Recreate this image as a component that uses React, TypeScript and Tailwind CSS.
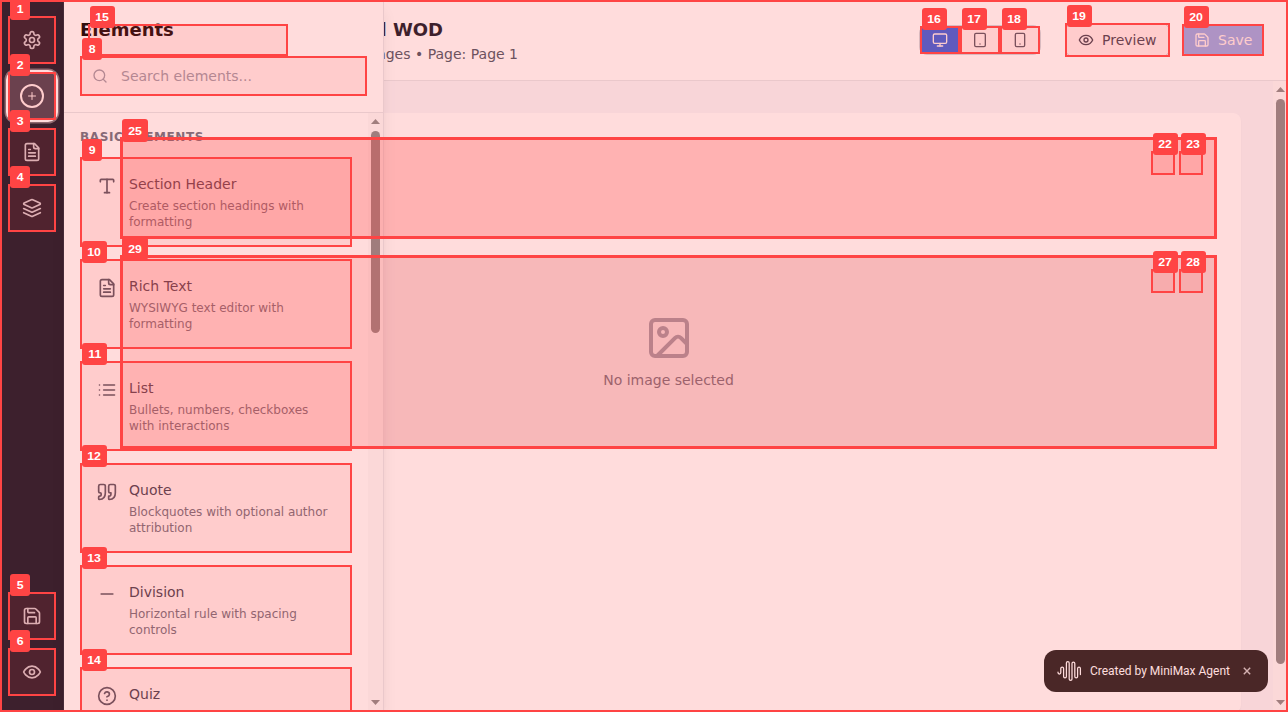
import type { ReactNode } from "react";
import { Plus, Search, Type, Minus, CircleHelp, Monitor, Tablet, Smartphone, Image as ImageIcon } from "lucide-react";

type IconProps = { size?: number; className?: string };

function Icon({ size = 20, className, children }: IconProps & { children: ReactNode }) {
  return (
    <svg
      width={size} height={size} viewBox="0 0 24 24" className={className}
      fill="none" stroke="currentColor" strokeWidth="2" strokeLinecap="round" strokeLinejoin="round"
    >
      {children}
    </svg>
  );
}

const Settings = (p: IconProps) => (
  <Icon {...p}>
    <path d="M12.22 2h-.44a2 2 0 0 0-2 2v.18a2 2 0 0 1-1 1.73l-.43.25a2 2 0 0 1-2 0l-.15-.08a2 2 0 0 0-2.73.73l-.22.38a2 2 0 0 0 .73 2.73l.15.1a2 2 0 0 1 1 1.72v.51a2 2 0 0 1-1 1.74l-.15.09a2 2 0 0 0-.73 2.73l.22.38a2 2 0 0 0 2.73.73l.15-.08a2 2 0 0 1 2 0l.43.25a2 2 0 0 1 1 1.73V20a2 2 0 0 0 2 2h.44a2 2 0 0 0 2-2v-.18a2 2 0 0 1 1-1.73l.43-.25a2 2 0 0 1 2 0l.15.08a2 2 0 0 0 2.73-.73l.22-.39a2 2 0 0 0-.73-2.73l-.15-.08a2 2 0 0 1-1-1.74v-.5a2 2 0 0 1 1-1.74l.15-.09a2 2 0 0 0 .73-2.73l-.22-.38a2 2 0 0 0-2.73-.73l-.15.08a2 2 0 0 1-2 0l-.43-.25a2 2 0 0 1-1-1.73V4a2 2 0 0 0-2-2z" />
    <circle cx="12" cy="12" r="3" />
  </Icon>
);
const FileText = (p: IconProps) => (
  <Icon {...p}>
    <path d="M15 2H6a2 2 0 0 0-2 2v16a2 2 0 0 0 2 2h12a2 2 0 0 0 2-2V7Z" />
    <path d="M14 2v4a2 2 0 0 0 2 2h4M10 9H8M16 13H8M16 17H8" />
  </Icon>
);
const Layers = (p: IconProps) => (
  <Icon {...p}>
    <path d="m12.83 2.18a2 2 0 0 0-1.66 0L2.6 6.08a1 1 0 0 0 0 1.83l8.58 3.91a2 2 0 0 0 1.66 0l8.58-3.9a1 1 0 0 0 0-1.83Z" />
    <path d="m22 17.65-9.17 4.16a2 2 0 0 1-1.66 0L2 17.65M22 12.65l-9.17 4.16a2 2 0 0 1-1.66 0L2 12.65" />
  </Icon>
);
const Save = (p: IconProps) => (
  <Icon {...p}>
    <path d="M15.2 3a2 2 0 0 1 1.4.6l3.8 3.8a2 2 0 0 1 .6 1.4V19a2 2 0 0 1-2 2H5a2 2 0 0 1-2-2V5a2 2 0 0 1 2-2z" />
    <path d="M17 21v-7a1 1 0 0 0-1-1H8a1 1 0 0 0-1 1v7M7 3v4a1 1 0 0 0 1 1h7" />
  </Icon>
);
const Eye = (p: IconProps) => (
  <Icon {...p}>
    <path d="M2 12s3-7 10-7 10 7 10 7-3 7-10 7-10-7-10-7Z" />
    <circle cx="12" cy="12" r="3" />
  </Icon>
);
const List = (p: IconProps) => (
  <Icon {...p}>
    <path d="M8 6h13M8 12h13M8 18h13M3 6h.01M3 12h.01M3 18h.01" />
  </Icon>
);
const Quote = (p: IconProps) => (
  <Icon {...p}>
    <path d="M3 21c3 0 7-1 7-8V5c0-1.25-.756-2.017-2-2H4c-1.25 0-2 .75-2 1.972V11c0 1.25.75 2 2 2 1 0 1 0 1 1v1c0 1-1 2-2 2s-1 .008-1 1.031V20c0 1 0 1 1 1z" />
    <path d="M15 21c3 0 7-1 7-8V5c0-1.25-.757-2.017-2-2h-4c-1.25 0-2 .75-2 1.972V11c0 1.25.75 2 2 2h.75c0 2.25.25 4-2.75 4v3c0 1 0 1 1 1z" />
  </Icon>
);

function RailButton({ children, active }: { children: ReactNode; active?: boolean }) {
  return (
    <button
      className={
        active
          ? "flex size-12 items-center justify-center rounded-lg bg-gray-700 text-white shadow-[0_0_0_2px_#fff,0_0_0_3.5px_#77727a]"
          : "flex size-12 items-center justify-center rounded-lg text-gray-300"
      }
    >
      {children}
    </button>
  );
}

const elements = [
  { icon: Type, title: "Section Header", text: "Create section headings with formatting" },
  { icon: FileText, title: "Rich Text", text: "WYSIWYG text editor with formatting" },
  { icon: List, title: "List", text: "Bullets, numbers, checkboxes with interactions" },
  { icon: Quote, title: "Quote", text: "Blockquotes with optional author attribution" },
  { icon: Minus, title: "Division", text: "Horizontal rule with spacing controls" },
  { icon: CircleHelp, title: "Quiz", text: "" },
];

function Arrow({ down }: { down?: boolean }) {
  return (
    <svg width="9" height="5" viewBox="0 0 9 5" className="shrink-0" fill="#8b8b8b">
      <path d={down ? "M0 0h9L4.5 5z" : "M0 5h9L4.5 0z"} />
    </svg>
  );
}

function Rail() {
  return (
    <nav className="flex w-16 shrink-0 flex-col justify-between border-r border-gray-800 bg-gray-900 py-4 pr-[7px] pl-2">
      <div className="flex flex-col gap-2">
        <RailButton><Settings /></RailButton>
        <RailButton active>
          <span className="flex size-6 items-center justify-center rounded-full border-2 border-white">
            <Plus size={12} />
          </span>
        </RailButton>
        <RailButton><FileText /></RailButton>
        <RailButton><Layers /></RailButton>
      </div>
      <div className="flex flex-col gap-2">
        <RailButton><Save /></RailButton>
        <RailButton><Eye /></RailButton>
      </div>
    </nav>
  );
}

function ElementsPanel() {
  return (
    <aside className="z-10 flex w-80 shrink-0 flex-col border-r border-gray-200 bg-white shadow-[0_10px_15px_-3px_rgba(0,0,0,0.1),0_4px_6px_-4px_rgba(0,0,0,0.1)]">
      <div className="flex h-[113px] shrink-0 flex-col gap-3 border-b border-gray-200 px-4 pt-4">
        <h2 className="text-lg font-semibold text-black">Elements</h2>
        <div className="flex h-10 shrink-0 items-center gap-[13px] px-3 text-sm text-gray-400">
          <Search size={16} />
          Search elements...
        </div>
      </div>
      <div className="flex min-h-0 flex-1">
        <div className="flex min-w-0 flex-1 flex-col overflow-hidden px-4">
          <h3 className="mt-4 mb-3 shrink-0 text-xs font-semibold tracking-wider text-gray-500">BASIC ELEMENTS</h3>
          <div className="flex flex-col gap-3">
            {elements.map(({ icon: ElementIcon, title, text }) => (
              <div key={title} className="flex h-[90px] shrink-0 gap-3 rounded-lg px-[17px] pt-[17px]">
                <ElementIcon size={20} className="mt-0.5 shrink-0 text-gray-600" />
                <div>
                  <div className="text-sm leading-5 font-medium text-gray-700">{title}</div>
                  <p className="mt-1 text-xs text-gray-500">{text}</p>
                </div>
              </div>
            ))}
          </div>
        </div>
        <div className="flex w-[15px] shrink-0 flex-col items-center bg-[#fafafa] pt-[6px] pb-[7px]">
          <Arrow />
          <div className="mt-[7px] h-[202px] w-[9px] rounded-full bg-[#8b8b8b]" />
          <div className="flex-1" />
          <Arrow down />
        </div>
      </div>
    </aside>
  );
}

function Header() {
  return (
    <header className="flex h-[81px] shrink-0 items-start justify-between border-b border-gray-200 bg-white pr-6">
      <div className="-ml-[66px] flex w-[200px] flex-col items-end pt-4 whitespace-nowrap">
        <h1 className="mr-[75px] text-lg font-semibold text-gray-900">Untitled WOD</h1>
        <p className="text-sm text-gray-600">2 pages • Page: Page 1</p>
      </div>
      <div className="flex h-20 items-center">
        <div className="mr-6 flex h-[30px] w-[122px] overflow-hidden rounded-lg border border-gray-300 text-gray-600">
          <div className="flex w-10 items-center justify-center bg-[#2563eb] text-white"><Monitor size={16} /></div>
          <div className="flex w-10 items-center justify-center"><Tablet size={16} /></div>
          <div className="flex w-10 items-center justify-center"><Smartphone size={16} /></div>
        </div>
        <button className="mr-3 flex h-[34px] w-[105px] items-center gap-2 rounded-lg border border-gray-300 pl-3 text-sm font-medium text-gray-700">
          <Eye size={16} />Preview
        </button>
        <button className="flex h-8 w-[82px] items-center gap-2 rounded-lg bg-[#2563eb] pl-3 text-sm font-medium text-white opacity-50">
          <Save size={16} />Save
        </button>
      </div>
    </header>
  );
}

function Canvas() {
  return (
    <div className="flex min-h-0 flex-1 bg-[#f7f7fb]">
      <div className="flex flex-1 flex-col overflow-hidden pt-8 pr-8">
        <div className="-ml-[288px] flex h-[600px] shrink-0 flex-col gap-[18px] rounded-lg bg-white p-6 shadow-[0_1px_2px_rgba(0,0,0,0.05)]">
          <div className="h-[102px] shrink-0" />
          <div className="flex h-[192px] shrink-0 flex-col items-center justify-center gap-2 rounded-lg bg-gray-100 pb-0.5 text-sm text-gray-500">
            <ImageIcon size={48} className="text-gray-400" />
            No image selected
          </div>
        </div>
      </div>
      <div className="flex w-[15px] shrink-0 flex-col items-center bg-[#fafafa] pt-[6px] pb-[7px]">
        <Arrow />
        <div className="mt-[7px] h-[565px] w-[9px] shrink-0 rounded-full bg-[#8b8b8b]" />
        <div className="flex-1" />
        <Arrow down />
      </div>
    </div>
  );
}

function AgentBadge() {
  return (
    <div className="absolute top-[650px] left-[1044px] z-20 flex h-[42px] w-[224px] items-center rounded-xl bg-[#212121] pl-[13px] font-['Roboto',sans-serif] text-[12px] text-white">
      <svg width="25" height="22" viewBox="0 0 25 22" fill="none" stroke="currentColor" strokeWidth="1.25" strokeLinecap="round">
        <path d="M1 12.2v.4a1.4 1.4 0 0 0 2.8 0V8.4a1.4 1.4 0 0 1 2.8 0v8.2a1.4 1.4 0 0 0 2.8 0V3a1.4 1.4 0 0 1 2.8 0v16a1.4 1.4 0 0 0 2.8 0V3.4a1.4 1.4 0 0 1 2.8 0v13.2a1.4 1.4 0 0 0 2.8 0V8.4a1.4 1.4 0 0 1 2.8 0v6.2" />
      </svg>
      <span className="ml-2 whitespace-nowrap tracking-[-0.02px]">Created by MiniMax Agent</span>
      <svg width="8" height="8" viewBox="0 0 8 8" className="ml-[13px]" stroke="#ccc" strokeWidth="1.4"><path d="m.8.8 6.4 6.4M7.2.8.8 7.2" /></svg>
    </div>
  );
}

// id, left, top, width, height
const regions: [string, number, number, number, number][] = [
  ["1", 8, 16, 48, 48], ["2", 8, 72, 48, 48], ["3", 8, 128, 48, 48], ["4", 8, 184, 48, 48],
  ["5", 8, 592, 48, 48], ["6", 8, 648, 48, 48], ["15", 88, 24, 200, 32], ["8", 80, 56, 287, 40],
  ["9", 80, 157, 272, 90], ["10", 80, 259, 272, 90], ["11", 80, 361, 272, 90],
  ["12", 80, 463, 272, 90], ["13", 80, 565, 272, 90], ["14", 80, 667, 272, 90],
  ["16", 920, 26, 40, 28], ["17", 960, 26, 40, 28], ["18", 1000, 26, 40, 28],
  ["19", 1065, 23, 105, 34], ["20", 1182, 24, 82, 32],
  ["22", 1151, 151, 24, 24], ["23", 1179, 151, 24, 24], ["25", 120, 137, 1097, 102],
  ["27", 1151, 269, 24, 24], ["28", 1179, 269, 24, 24], ["29", 120, 255, 1097, 194],
];

function Regions() {
  return (
    <div className="absolute inset-0 z-30 overflow-hidden">
      <div className="absolute inset-0 border-2 border-[#f44] bg-[#f44]/19" />
      {regions.map(([id, left, top, width, height]) => (
        <div
          key={id}
          className={
            id === "25" ? "absolute border-3 border-[#f44] bg-[#f44]/27"
            : id === "29" ? "absolute border-3 border-[#f44] bg-[#f44]/19"
            : "absolute border-2 border-[#f44] bg-[#f44]/10"
          }
          style={{ left, top, width, height }}
        />
      ))}
      {regions.map(([id, left, top, width]) => (
        <span
          key={id}
          className={
            id.length === 1
              ? "absolute flex h-[22px] w-5 items-center justify-center rounded-[3px] bg-[#f44] font-['Liberation_Sans',sans-serif] text-[11px] font-bold text-white"
              : width > 1000
              ? "absolute flex h-[23px] w-[26px] items-center justify-center rounded-[3px] bg-[#f44] pt-px pl-px font-['Liberation_Sans',sans-serif] text-[11px] font-bold text-white"
              : "absolute flex h-[22px] w-[25px] items-center justify-center rounded-[3px] bg-[#f44] font-['Liberation_Sans',sans-serif] text-[11px] font-bold text-white"
          }
          style={{ left: left + 2, top: top - 18 }}
        >
          <span className="scale-x-112">{id}</span>
        </span>
      ))}
    </div>
  );
}

export default function App() {
  return (
    <div className="relative flex h-[712px] w-[1288px] overflow-hidden bg-white font-['DejaVu_Sans',sans-serif]">
      <Rail />
      <ElementsPanel />
      <main className="flex min-w-0 flex-1 flex-col">
        <Header />
        <Canvas />
      </main>
      <AgentBadge />
      <Regions />
    </div>
  );
}
